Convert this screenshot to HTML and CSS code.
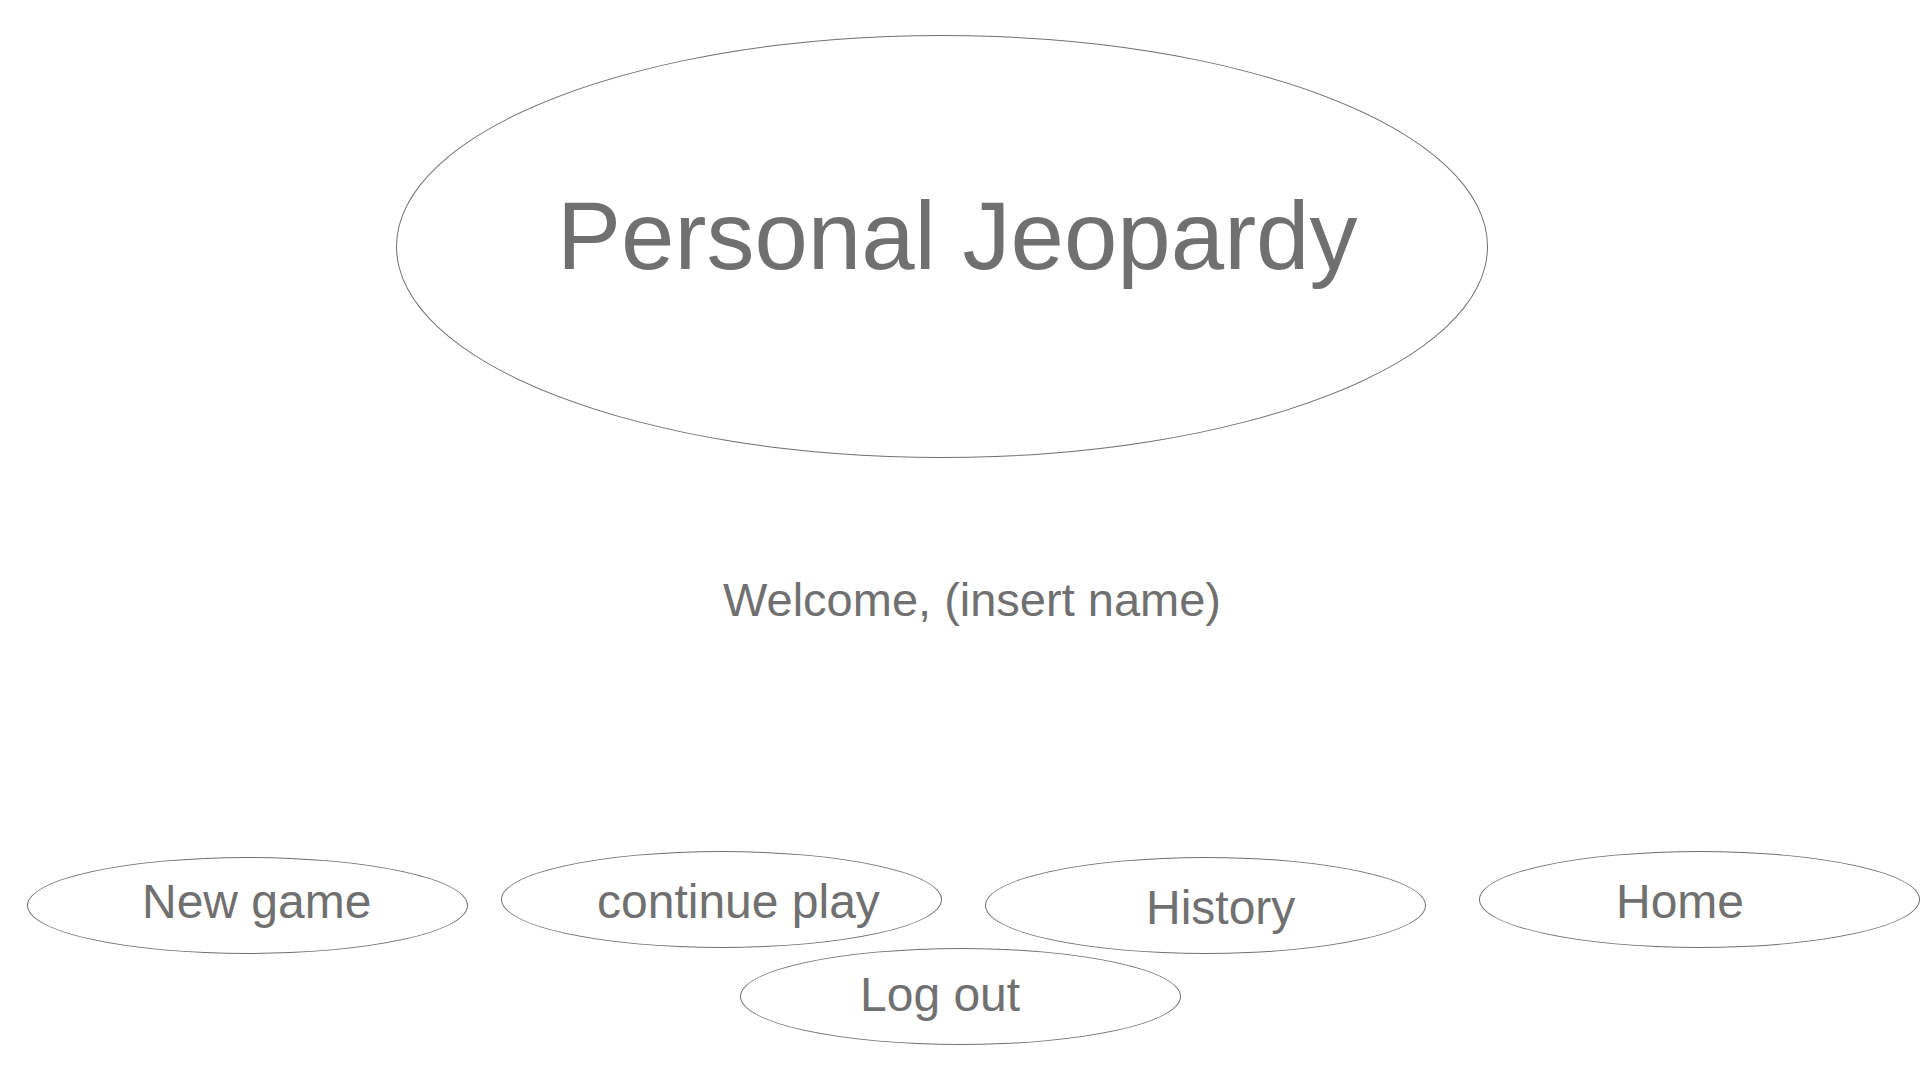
FILE: index.html
```
<!DOCTYPE html>
<html lang="en">
<head>
  <meta charset="utf-8">
  <meta name="viewport" content="width=device-width, initial-scale=1">
  <title>Personal Jeopardy</title>
  <link rel="stylesheet" href="styles.css">
</head>
<body>
  <header class="masthead">
    <h1 class="title">Personal Jeopardy</h1>
  </header>
  <main class="greeting">
    <p class="welcome">Welcome, (insert name)</p>
  </main>
  <nav class="menu" aria-label="Main menu">
    <div class="menu-row">
      <button type="button" class="oval new-game">New game</button>
      <button type="button" class="oval continue-play">continue play</button>
      <button type="button" class="oval history">History</button>
      <button type="button" class="oval home">Home</button>
    </div>
    <div class="logout-row">
      <button type="button" class="oval log-out">Log out</button>
    </div>
  </nav>
</body>
</html>
```
FILE: styles.css
```
* {
  box-sizing: border-box;
}

body {
  margin: 0;
  background: #fff;
  color: #707070;
  font-family: "Liberation Sans", Arial, sans-serif;
  font-size: 48px;
  line-height: 56px;
}

.masthead {
  display: grid;
  grid-template-columns: 396fr 1092fr 432fr;
  padding-top: 35px;
}

.title {
  grid-column: 2;
  margin: 0;
  aspect-ratio: 1092 / 423;
  padding: 144px 0 0 160px;
  border: 1px solid #707070;
  border-radius: 50%;
  font-size: 96px;
  font-weight: 400;
  line-height: 112px;
  white-space: nowrap;
}

.greeting {
  display: grid;
  grid-template-columns: 723fr 1197fr;
  margin-top: 114px;
}

.welcome {
  grid-column: 2;
  margin: 0;
  font-size: 47px;
  white-space: nowrap;
}

.menu {
  margin-top: 223px;
}

.menu-row {
  display: grid;
  grid-template-columns: 27fr 441fr 33fr 441fr 43fr 441fr 53fr 441fr;
  align-items: start;
}

.logout-row {
  display: grid;
  grid-template-columns: 740fr 441fr 739fr;
  margin-top: -6px;
}

.oval {
  display: flex;
  align-items: flex-start;
  min-width: 0;
  height: 97px;
  padding: 22px 0 0;
  border: 1px solid #707070;
  border-radius: 50%;
  background: transparent;
  color: inherit;
  font: inherit;
  white-space: nowrap;
  cursor: pointer;
}

.new-game {
  grid-column: 2;
  margin-top: 6px;
  padding-top: 16px;
  padding-left: 114px;
}

.continue-play {
  grid-column: 4;
  padding-left: 95px;
}

.history {
  grid-column: 6;
  margin-top: 6px;
  padding-left: 160px;
}

.home {
  grid-column: 8;
  padding-left: 136px;
}

.log-out {
  grid-column: 2;
  padding-top: 18px;
  padding-left: 119px;
}
```
